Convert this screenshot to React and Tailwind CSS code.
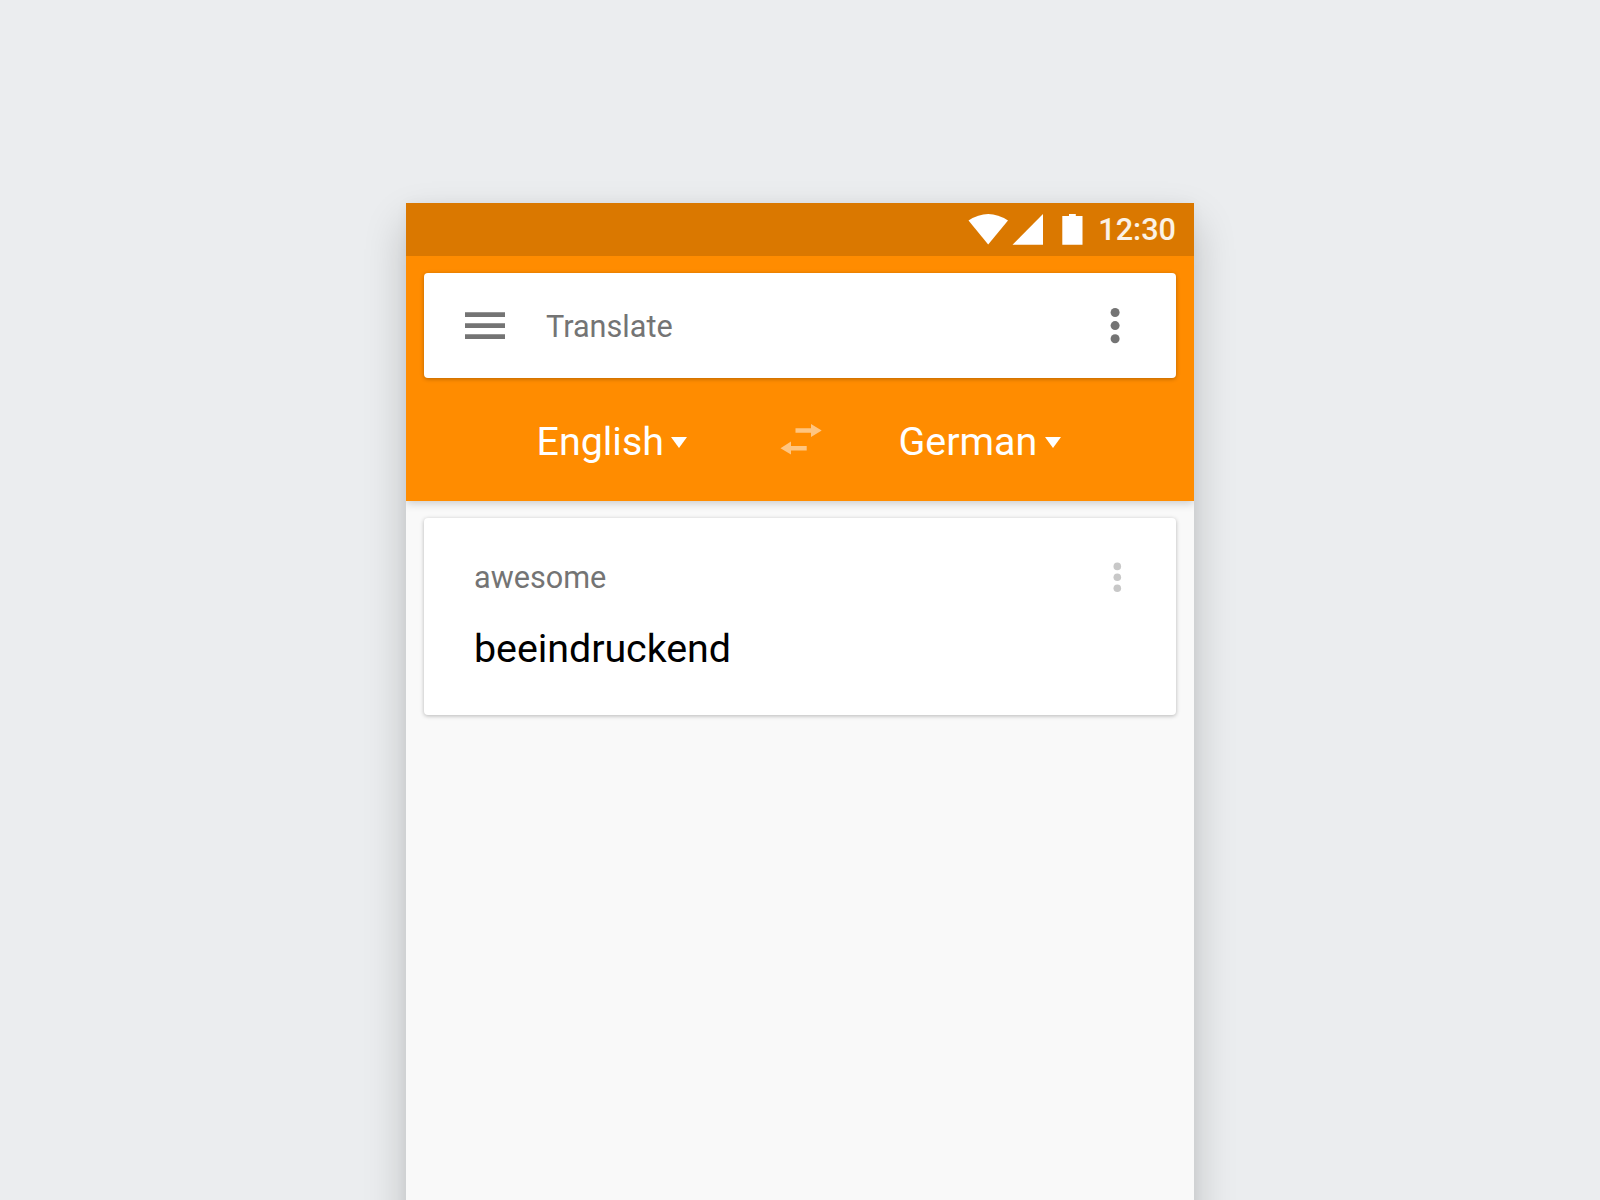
function StatusBar() {
  return (
    <div className="relative z-10 flex h-[52.5px] shrink-0 justify-end bg-[#da7800] pr-[18px]">
      <svg className="mt-[11px] h-8 w-[116px]" viewBox="967 214 116 32" fill="#fff">
        <path d="M968.5 220.5Q988.2 207.5 1008 220.5L988.2 244.6Z" />
        <path d="M1012.5 244.8L1043 214V244.8Z" />
        <path d="M1062.3 216H1069V214H1075.8V216H1082.5V244.8H1062.3Z" />
      </svg>
      <span className="ml-[15.5px] mt-[9px] text-[30.64px] font-medium leading-[36px] text-white/90">12:30</span>
    </div>
  );
}

function Caret() {
  return (
    <svg className="mt-[59px] h-[11px] w-4" viewBox="0 0 16 11" fill="#fff">
      <path d="M0 0H16L8 11Z" />
    </svg>
  );
}

function SearchCard() {
  return (
    <div className="mx-[18px] mt-[17.5px] flex h-[105px] rounded-[4px] bg-white text-[#747474] shadow-[0_1px_4px_rgba(0,0,0,0.28)]">
      <svg className="ml-[41px] mt-[39px] h-[28px] w-10" viewBox="0 0 40 28" fill="currentColor">
        <path d="M0 0.2H40V5H0ZM0 11.2H40V16H0ZM0 22.2H40V27H0Z" />
      </svg>
      <span className="ml-[41px] mt-[36px] text-[30.64px] leading-[36px]">Translate</span>
      <svg className="ml-auto mr-[56px] mt-[35px] h-[36px] w-[10px]" viewBox="0 0 10 36" fill="currentColor">
        <circle cx="5.1" cy="4.5" r="4.5" />
        <circle cx="5.1" cy="17.6" r="4.5" />
        <circle cx="5.1" cy="30.7" r="4.5" />
      </svg>
    </div>
  );
}

function LanguageRow() {
  return (
    <div className="flex h-[122.5px] text-[39.4px] leading-[46px] text-white">
      <div className="flex w-[374px] pl-[130.5px]">
        <span className="mt-[41px] w-[134.5px]">English</span>
        <Caret />
      </div>
      <svg className="mt-[46px] h-[31px] w-[42px]" viewBox="780 424 42 31" fill="#ffc580">
        <path d="M795.5 428.2H811V424L821.7 430.6L811 437V432.8H795.5Z" />
        <path d="M806.7 446H791V441.6L780.5 448.2L791 454.6V450.4H806.7Z" />
      </svg>
      <div className="flex pl-[76.5px]">
        <span className="mt-[41px] w-[146.5px]">German</span>
        <Caret />
      </div>
    </div>
  );
}

function TranslationCard() {
  return (
    <div className="mx-[18px] mt-[17.5px] flex h-[197px] justify-between rounded-[4px] bg-white shadow-[0_1px_4px_rgba(0,0,0,0.27)]">
      <div className="flex flex-col pl-[50px] pt-[42px]">
        <span className="text-[30.64px] leading-[36px] text-[#747474]">awesome</span>
        <span className="mt-[30px] text-[39.4px] leading-[46px] tracking-[-0.05px] text-black">beeindruckend</span>
      </div>
      <svg className="mr-[54px] mt-[44px] h-[31px] w-[9px] text-[#c8c8c8]" viewBox="0 0 9 31" fill="currentColor">
        <circle cx="4.3" cy="4.4" r="3.8" />
        <circle cx="4.3" cy="15.3" r="3.8" />
        <circle cx="4.3" cy="26.2" r="3.8" />
      </svg>
    </div>
  );
}

export default function App() {
  return (
    <div className="flex h-[1200px] w-full justify-center overflow-hidden bg-[#ebedef] pt-[203px] font-[Roboto,sans-serif]">
      <div className="flex h-[1400px] w-[788px] shrink-0 flex-col overflow-hidden bg-[#f9f9f9] shadow-[0_20px_40px_rgba(0,0,0,0.2),0_0_12px_rgba(0,0,0,0.04)]">
        <StatusBar />
        <div className="shrink-0 bg-[#ff8c00] shadow-[0_2px_9px_rgba(0,0,0,0.2)]">
          <SearchCard />
          <LanguageRow />
        </div>
        <TranslationCard />
      </div>
    </div>
  );
}
